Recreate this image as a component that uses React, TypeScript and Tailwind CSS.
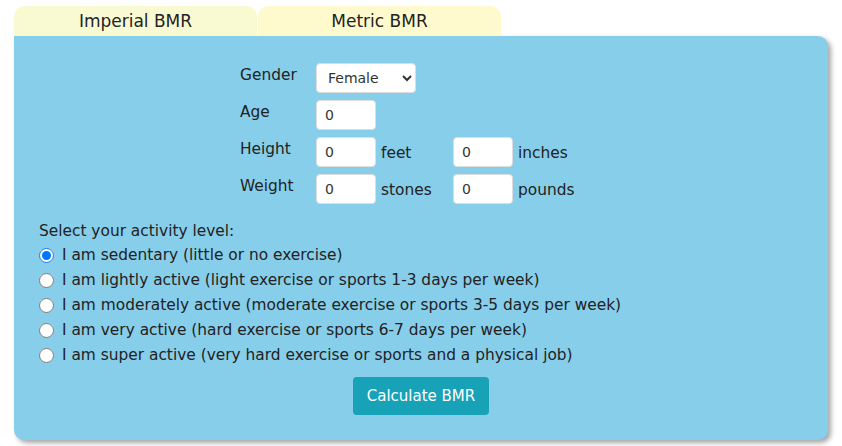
import React from "react";

const font = { fontFamily: '"DejaVu Sans", Verdana, sans-serif' };

export default function App() {
  const activities = [
    "I am sedentary (little or no exercise)",
    "I am lightly active (light exercise or sports 1-3 days per week)",
    "I am moderately active (moderate exercise or sports 3-5 days per week)",
    "I am very active (hard exercise or sports 6-7 days per week)",
    "I am super active (very hard exercise or sports and a physical job)",
  ];
  const input =
    "w-[60px] h-[30px] bg-white rounded-[4px] border border-[#ddd] px-[8px] text-[14px] text-[#333] outline-none";
  return (
    <div className="w-[842px] h-[446px] bg-white pt-[6px] pl-[14px] text-[#222]" style={font}>
      <div className="flex gap-[1px]">
        <div className="w-[243px] h-[30px] bg-[#FAFAD2] rounded-t-[10px] flex items-center justify-center text-[17px] pt-[1px]">
          Imperial BMR
        </div>
        <div className="w-[243px] h-[30px] bg-[#FFFACD] rounded-t-[10px] flex items-center justify-center text-[17px] pt-[1px]">
          Metric BMR
        </div>
      </div>
      <div className="w-[814px] h-[404px] bg-[#87CEEB] rounded-b-[10px] rounded-tr-[10px] shadow-[3px_3px_5px_rgba(0,0,0,0.35)] pt-[27px]">
        <div className="ml-[226px] flex flex-col gap-[7px] text-[15.4px]">
          <div className="flex items-start h-[30px]">
            <span className="w-[76px] pt-[1px]">Gender</span>
            <select
              className="w-[100px] h-[30px] bg-white rounded-[4px] border border-[#ddd] pl-[7px] text-[14px] text-[#333] outline-none"
              defaultValue="Female"
              style={font}
            >
              <option>Female</option>
              <option>Male</option>
            </select>
          </div>
          <div className="flex items-start h-[30px]">
            <span className="w-[76px] pt-[1px]">Age</span>
            <input className={input} defaultValue="0" style={font} />
          </div>
          <div className="flex items-start h-[30px]">
            <span className="w-[76px] pt-[1px]">Height</span>
            <input className={input} defaultValue="0" style={font} />
            <span className="w-[77px] pl-[5px] pt-[5px]">feet</span>
            <input className={input} defaultValue="0" style={font} />
            <span className="pl-[5px] pt-[5px]">inches</span>
          </div>
          <div className="flex items-start h-[30px]">
            <span className="w-[76px] pt-[1px]">Weight</span>
            <input className={input} defaultValue="0" style={font} />
            <span className="w-[77px] pl-[5px] pt-[5px]">stones</span>
            <input className={input} defaultValue="0" style={font} />
            <span className="pl-[5px] pt-[5px]">pounds</span>
          </div>
        </div>
        <div className="ml-[25px] mt-[16px] text-[15.4px]">
          <div className="h-[24px] leading-[24px] -mt-[1px]">Select your activity level:</div>
          {activities.map((a, i) => (
            <label key={i} className="flex items-center h-[25px] gap-[8px]">
              <input
                type="radio"
                name="act"
                defaultChecked={i === 0}
                className="w-[15px] h-[15px] m-0 accent-[#0075ff]"
              />
              <span>{a}</span>
            </label>
          ))}
        </div>
        <div className="flex justify-center mt-[9px]">
          <button className="w-[136px] h-[38px] bg-[#17A2B8] text-white rounded-[4px] text-[15px]" style={font}>
            Calculate BMR
          </button>
        </div>
      </div>
    </div>
  );
}
